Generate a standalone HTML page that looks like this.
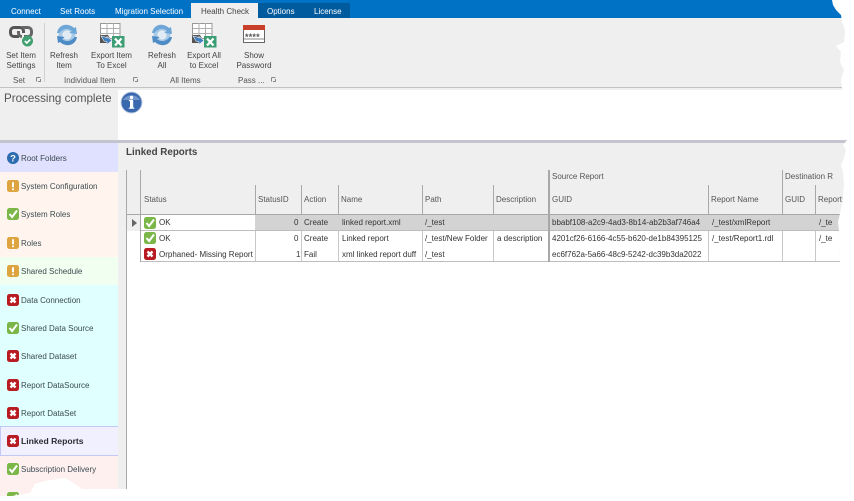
<!DOCTYPE html>
<html><head><meta charset="utf-8"><style>
html,body{margin:0;padding:0;background:#fff;width:854px;height:501px;overflow:hidden}
#p{position:absolute;left:0;top:0;width:854px;height:501px;overflow:hidden;font-family:"Liberation Sans",sans-serif;font-size:8px;color:#444;
clip-path:polygon(0 0,832px 0,833px 5px,836px 10px,841px 15px,842px 22px,845px 30px,844px 42px,836px 46px,841px 52px,840px 62px,844px 70px,841px 80px,842px 88px,846px 100px,847px 140px,843px 145px,846px 150px,844px 158px,841px 165px,843px 172px,844px 185px,842px 205px,838px 222px,839px 232px,840px 262px,839px 489px,82px 489px,72px 482px,65px 478px,45px 481px,35px 484px,30px 493px,12px 496px,0 496px)}
#p div{position:absolute;white-space:nowrap}
.t{color:#fff;top:7px;font-size:8px;line-height:10px;filter:blur(.25px)}
.c{text-align:center;line-height:10px;color:#444;filter:blur(.25px)}
.g{top:76px;color:#555;font-size:8px;line-height:10px;filter:blur(.25px)}
.s{left:21px;font-size:8px;color:#3c4a50;line-height:12px;margin-top:1px;filter:blur(.25px)}
.h{font-size:8px;color:#555;top:195px;line-height:10px;filter:blur(.25px)}
.r{font-size:8px;color:#333;line-height:10px;filter:blur(.2px)}
.v{background:#a8a8a8;width:1px}
.w{background:#c8c8c8;width:1px;top:231px;height:30px}
svg{position:absolute;overflow:visible}
</style></head><body><div id="p">
<svg width="0" height="0"><defs>
<symbol id="ok" viewBox="0 0 12 12"><rect width="12" height="12" rx="2.5" fill="#7ab648"/><path d="M2.5 6l2.6 3L10 2.5" fill="none" stroke="#fff" stroke-width="2"/></symbol>
<symbol id="er" viewBox="0 0 12 12"><rect width="12" height="12" rx="2.5" fill="#b81c22"/><path d="M3.5 3.5l5 5M8.500 3.500l-5 5" stroke="#fff" stroke-width="2.400"/></symbol>
<symbol id="wa" viewBox="0 0 12 12"><rect width="12" height="12" rx="2.5" fill="#dda43f"/><path d="M6 2.200v5M6 8.500v1.600" stroke="#fff" stroke-width="2"/></symbol>
<symbol id="rf" viewBox="0 0 26 22"><circle cx="13" cy="11" r="6.500" fill="none" stroke="#a8cbe8" stroke-width="4"/><path d="M3 9C4 3 9 0 14 1c3 .5 5 2 6 3l2-1 1 7-8-1 3-2c-2-2-6-3-9-1-2 1-3 2-3.500 3z" fill="#6ea6d8"/><path d="M23 13c-1 6-6 9-11 8-3-.5-5-2-6-3l-2 1-1-7 8 1-3 2c2 2 6 3 9 1 2-1 3-2 3.500-3z" fill="#4f8cc6"/><circle cx="13" cy="11" r="3.500" fill="#dfeaf4"/></symbol>
<symbol id="xl" viewBox="0 0 25 25"><path d="M.5.500h19.500v15H.5z" fill="#fff" stroke="#999"/><path d="M.5 5.500h19.500M.5 10.500h19.500M7 0v15M13.500 0v15" stroke="#b0b0b0"/><path d="M0 12h8l3 5-3 3H0z" fill="#555"/><path d="M1 13l4 1 2 1v-1.500l5 4-5 4V19l-3-1z" fill="#3f7fc0" stroke="#efefef" stroke-width=".6"/><rect x="12" y="13" width="12.500" height="11.500" fill="#3d9e74"/><path d="M15 15.500l6.500 7M21.500 15.500l-6.500 7" stroke="#fff" stroke-width="2.200"/></symbol>
</defs></svg>

<div style="left:0;top:0;width:854px;height:18px;background:#0072c6"></div>
<div style="left:258px;top:3px;width:92px;height:15px;background:#005a9e"></div>
<div style="left:191px;top:3px;width:67px;height:15px;background:#efefef"></div>
<div class="t" style="left:11px">Connect</div>
<div class="t" style="left:60px">Set Roots</div>
<div class="t" style="left:115px">Migration Selection</div>
<div class="t" style="left:201px;color:#444">Health Check</div>
<div class="t" style="left:267px">Options</div>
<div class="t" style="left:314px">License</div>

<div style="left:0;top:18px;width:854px;height:69px;background:#efefef"></div>
<div style="left:44px;top:23px;width:1px;height:59px;background:#d0d0d0"></div>

<svg style="left:9px;top:26px" width="24" height="20" viewBox="0 0 24 20"><path d="M10 10.500H5a3.500 3.500 0 0 1-3.500-3.500V5A3.500 3.500 0 0 1 5 1.500h6A3.500 3.500 0 0 1 14.500 5v2" fill="none" stroke="#555" stroke-width="3"/><path d="M9.500 5v2a3.500 3.500 0 0 0 3.500 3.500M13 1.500h6A3.500 3.500 0 0 1 22.500 5v2a3.500 3.500 0 0 1-3.500 3.500h-4" fill="none" stroke="#666" stroke-width="3"/><circle cx="18.500" cy="15" r="5.500" fill="#41a070"/><path d="M15.800 15l2 2 3.500-3.500" fill="none" stroke="#fff" stroke-width="1.600"/></svg>
<svg style="left:54px;top:24px" width="26" height="22"><use href="#rf"/></svg>
<svg style="left:100px;top:23px" width="25" height="25"><use href="#xl"/></svg>
<svg style="left:149px;top:24px" width="26" height="22"><use href="#rf"/></svg>
<svg style="left:192px;top:23px" width="25" height="25"><use href="#xl"/></svg>
<svg style="left:243px;top:25px" width="22" height="18" viewBox="0 0 22 18"><rect x=".5" y=".5" width="21" height="17" fill="#fff" stroke="#666"/><rect width="22" height="5" fill="#c8402c"/><path d="M1 14h20" stroke="#888"/></svg>
<div style="left:245px;top:33px;font-size:9px;font-weight:bold;color:#555;letter-spacing:.2px;line-height:8px">****</div>

<div class="c" style="left:0;top:51px;width:42px">Set Item<br>Settings</div>
<div class="c" style="left:46px;top:51px;width:36px">Refresh<br>Item</div>
<div class="c" style="left:86px;top:51px;width:51px">Export Item<br>To Excel</div>
<div class="c" style="left:144px;top:51px;width:36px">Refresh<br>All</div>
<div class="c" style="left:183px;top:51px;width:42px">Export All<br>to Excel</div>
<div class="c" style="left:232px;top:51px;width:44px">Show<br>Password</div>
<div class="g" style="left:13px">Set</div>
<div class="g" style="left:64px">Individual Item</div>
<div class="g" style="left:170px">All Items</div>
<div class="g" style="left:238px">Pass ...</div>
<svg style="left:36px;top:77px" width="5" height="5"><path d="M.5.500h4M.5.500v4M4.500 2v2.500H2" stroke="#888" fill="none"/></svg>
<svg style="left:133px;top:77px" width="5" height="5"><path d="M.5.500h4M.5.500v4M4.500 2v2.500H2" stroke="#888" fill="none"/></svg>
<svg style="left:271px;top:77px" width="5" height="5"><path d="M.5.500h4M.5.500v4M4.500 2v2.500H2" stroke="#888" fill="none"/></svg>

<div style="left:0;top:87px;width:854px;height:1px;background:#c2c2c2"></div>
<div style="left:0;top:88px;width:118px;height:52px;background:#efefef"></div>
<div style="left:118px;top:90px;width:736px;height:49px;background:#fff"></div>
<div style="left:118px;top:88px;width:736px;height:2px;background:#efefef"></div>
<div style="left:4px;top:92px;font-size:11.600px;line-height:14px;color:#555;filter:blur(.25px)">Processing complete</div>
<svg style="left:120px;top:91px" width="23" height="23" viewBox="0 0 23 23"><circle cx="11.500" cy="11.500" r="10.500" fill="#3a68ae" stroke="#c3d0e4"/><path d="M3 9a9 7 0 0 1 17 0z" fill="#6f95c9"/><rect x="10" y="9.500" width="3.200" height="7.500" fill="#fff"/><path d="M8.800 9.500H13M8.800 17.200h5.600" stroke="#fff" stroke-width="1.200"/><circle cx="11.500" cy="6.500" r="1.700" fill="#fff"/></svg>
<div style="left:0;top:140px;width:854px;height:3px;background:#c4c4ce"></div>

<div style="left:0;top:143px;width:118px;height:29px;background:#e0e0ff"></div>
<div style="left:0;top:172px;width:118px;height:85px;background:#fff5ee"></div>
<div style="left:0;top:257px;width:118px;height:28px;background:#f0fff0"></div>
<div style="left:0;top:285px;width:118px;height:142px;background:#e0ffff"></div>
<div style="left:0;top:426px;width:117px;height:28px;background:#f0f0ff;border:1px solid #c4c8f4"></div>
<div style="left:0;top:456px;width:118px;height:41px;background:#fff0f0"></div>

<svg style="left:7px;top:152px" width="12" height="12" viewBox="0 0 12 12"><circle cx="6" cy="6" r="6" fill="#2c6cb0"/><text x="6" y="9.500" font-size="9.500" font-weight="bold" fill="#fff" text-anchor="middle" font-family="Liberation Sans">?</text></svg>
<svg style="left:7px;top:180px" width="12" height="12"><use href="#wa"/></svg>
<svg style="left:7px;top:208px" width="12" height="12"><use href="#ok"/></svg>
<svg style="left:7px;top:237px" width="12" height="12"><use href="#wa"/></svg>
<svg style="left:7px;top:265px" width="12" height="12"><use href="#wa"/></svg>
<svg style="left:7px;top:294px" width="12" height="12"><use href="#er"/></svg>
<svg style="left:7px;top:322px" width="12" height="12"><use href="#ok"/></svg>
<svg style="left:7px;top:350px" width="12" height="12"><use href="#er"/></svg>
<svg style="left:7px;top:379px" width="12" height="12"><use href="#er"/></svg>
<svg style="left:7px;top:407px" width="12" height="12"><use href="#er"/></svg>
<svg style="left:7px;top:435px" width="12" height="12"><use href="#er"/></svg>
<svg style="left:7px;top:463px" width="12" height="12"><use href="#ok"/></svg>
<svg style="left:7px;top:492px" width="12" height="12"><use href="#ok"/></svg>

<div class="s" style="top:152px">Root Folders</div>
<div class="s" style="top:180px">System Configuration</div>
<div class="s" style="top:208px">System Roles</div>
<div class="s" style="top:237px">Roles</div>
<div class="s" style="top:265px">Shared Schedule</div>
<div class="s" style="top:294px">Data Connection</div>
<div class="s" style="top:322px">Shared Data Source</div>
<div class="s" style="top:350px">Shared Dataset</div>
<div class="s" style="top:379px">Report DataSource</div>
<div class="s" style="top:407px">Report DataSet</div>
<div class="s" style="top:434px;font-weight:bold;color:#2c2c34;font-size:8.600px">Linked Reports</div>
<div class="s" style="top:463px">Subscription Delivery</div>

<div style="left:118px;top:143px;width:736px;height:119px;background:#efefef"></div>
<div style="left:118px;top:262px;width:8px;height:228px;background:#efefef"></div>
<div style="left:126px;top:170px;width:1px;height:320px;background:#a8a8a8"></div>
<div style="left:126px;top:147px;font-weight:bold;font-size:9.800px;line-height:12px;color:#444;filter:blur(.25px)">Linked Reports</div>

<div style="left:255px;top:215px;width:590px;height:15px;background:#d3d3d3"></div>
<div style="left:140px;top:215px;width:115px;height:46px;background:#fff"></div>
<div style="left:127px;top:231px;width:13px;height:31px;background:#fff"></div>
<div style="left:255px;top:231px;width:590px;height:30px;background:#fff"></div>
<div style="left:127px;top:214px;width:718px;height:1px;background:#a8a8a8"></div>
<div style="left:140px;top:230px;width:705px;height:1px;background:#bdbdbd"></div>
<div style="left:140px;top:261px;width:705px;height:1px;background:#bdbdbd"></div>

<div class="v" style="left:140px;top:170px;height:92px"></div>
<div class="v" style="left:255px;top:185px;height:30px"></div>
<div class="v" style="left:301px;top:185px;height:30px"></div>
<div class="v" style="left:338px;top:185px;height:30px"></div>
<div class="v" style="left:422px;top:185px;height:30px"></div>
<div class="v" style="left:493px;top:185px;height:30px"></div>
<div class="v" style="left:548px;top:170px;height:92px;width:2px"></div>
<div class="v" style="left:708px;top:185px;height:30px"></div>
<div class="v" style="left:782px;top:170px;height:45px"></div>
<div class="v" style="left:815px;top:185px;height:30px"></div>
<div class="w" style="left:255px"></div>
<div class="w" style="left:301px"></div>
<div class="w" style="left:338px"></div>
<div class="w" style="left:422px"></div>
<div class="w" style="left:493px"></div>
<div class="w" style="left:708px"></div>
<div class="w" style="left:782px"></div>
<div class="w" style="left:815px"></div>

<div class="h" style="left:144px">Status</div>
<div class="h" style="left:258px">StatusID</div>
<div class="h" style="left:304px">Action</div>
<div class="h" style="left:341px">Name</div>
<div class="h" style="left:425px">Path</div>
<div class="h" style="left:496px">Description</div>
<div class="h" style="left:552px;top:172px">Source Report</div>
<div class="h" style="left:552px">GUID</div>
<div class="h" style="left:711px">Report Name</div>
<div class="h" style="left:785px;top:172px">Destination R</div>
<div class="h" style="left:785px">GUID</div>
<div class="h" style="left:818px">Reports</div>

<svg style="left:132px;top:219px" width="5" height="8"><path d="M0 0l5 4-5 4z" fill="#666"/></svg>
<svg style="left:144px;top:217px" width="12" height="12"><use href="#ok"/></svg>
<svg style="left:144px;top:232px" width="12" height="12"><use href="#ok"/></svg>
<svg style="left:144px;top:248px" width="12" height="12"><use href="#er"/></svg>

<div class="r" style="left:159px;top:218px">OK</div>
<div class="r" style="left:294px;top:218px">0</div>
<div class="r" style="left:304px;top:218px">Create</div>
<div class="r" style="left:342px;top:218px">linked report.xml</div>
<div class="r" style="left:425px;top:218px">/_test</div>
<div class="r" style="left:552px;top:218px">bbabf108-a2c9-4ad3-8b14-ab2b3af746a4</div>
<div class="r" style="left:712px;top:218px">/_test/xmlReport</div>
<div class="r" style="left:819px;top:218px">/_te</div>

<div class="r" style="left:159px;top:234px">OK</div>
<div class="r" style="left:294px;top:234px">0</div>
<div class="r" style="left:304px;top:234px">Create</div>
<div class="r" style="left:342px;top:234px">Linked report</div>
<div class="r" style="left:425px;top:234px">/_test/New Folder</div>
<div class="r" style="left:497px;top:234px">a description</div>
<div class="r" style="left:552px;top:234px">4201cf26-6166-4c55-b620-de1b84395125</div>
<div class="r" style="left:712px;top:234px">/_test/Report1.rdl</div>
<div class="r" style="left:819px;top:234px">/_te</div>

<div class="r" style="left:159px;top:250px">Orphaned- Missing Report</div>
<div class="r" style="left:296px;top:250px">1</div>
<div class="r" style="left:304px;top:250px">Fail</div>
<div class="r" style="left:342px;top:250px">xml linked report duff</div>
<div class="r" style="left:425px;top:250px">/_test</div>
<div class="r" style="left:552px;top:250px">ec6f762a-5a66-48c9-5242-dc39b3da2022</div>
</div></body></html>
